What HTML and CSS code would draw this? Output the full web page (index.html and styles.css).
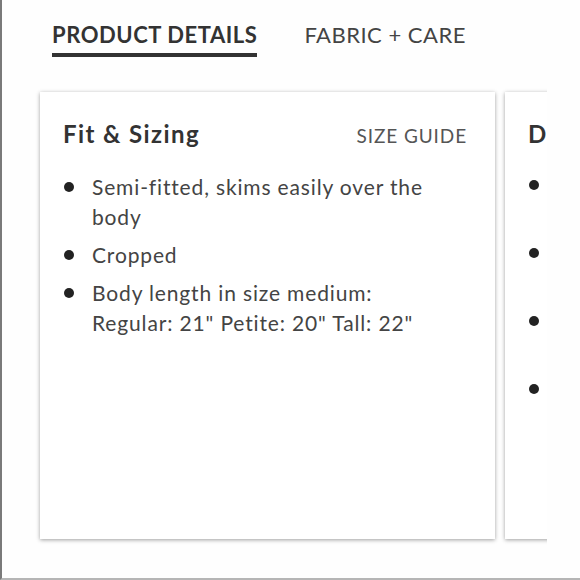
FILE: index.html
```html
<!DOCTYPE html>
<html lang="en">
<head>
<meta charset="utf-8">
<title>Product Details</title>
<link rel="stylesheet" href="styles.css">
</head>
<body>
<div class="frame">
  <nav class="tabs">
    <span class="tab tab-active">PRODUCT DETAILS</span>
    <span class="tab">FABRIC + CARE</span>
  </nav>
  <div class="carousel">
    <section class="card">
      <header class="card-head">
        <h2 class="card-title">Fit &amp; Sizing</h2>
        <span class="card-link">SIZE GUIDE</span>
      </header>
      <ul class="bullets">
        <li>Semi-fitted, skims easily over the body</li>
        <li>Cropped</li>
        <li>Body length in size medium:<br>Regular: 21" Petite: 20" Tall: 22"</li>
      </ul>
    </section>
    <section class="card">
      <header class="card-head">
        <h2 class="card-title">Details</h2>
      </header>
      <ul class="bullets">
        <li>Crewneck with ribbed trim at neckline and cuffs</li>
        <li>Long sleeves with a slightly dropped shoulder seam</li>
        <li>Lightweight knit that layers easily under jackets</li>
        <li>Import. Select stores, online and by phone only</li>
      </ul>
    </section>
  </div>
</div>
</body>
</html>
```
FILE: styles.css
```css
* { box-sizing: border-box; }
html, body {
  margin: 0;
  padding: 0;
  background: #ffffff;
}
body {
  width: 580px;
  height: 580px;
  overflow: hidden;
  font-family: Lato, "Open Sans", sans-serif;
  color: #3a3a3a;
}
.frame {
  width: 580px;
  height: 580px;
  border-left: 2px solid #7a7a7a;
  border-bottom: 2px solid #b5b5b5;
  background: #fefefe;
}
.tabs {
  display: flex;
  gap: 47px;
  padding: 20px 0 0 50px;
}
.tab {
  font-size: 22px;
  line-height: 30px;
  letter-spacing: 0.5px;
  color: #444;
  padding-bottom: 3px;
  border-bottom: 4px solid transparent;
}
.tab-active {
  font-weight: 700;
  letter-spacing: 0.55px;
  color: #333;
  border-bottom-color: #333;
}
.carousel {
  display: flex;
  gap: 10px;
  width: 515px;
  margin: 27px 0 0 30px;
  padding: 8px 0 10px 8px;
  overflow: hidden;
}
.card {
  flex: 0 0 455px;
  height: 447px;
  background: #fff;
  box-shadow: 0 1px 4px rgba(0, 0, 0, 0.38);
  padding: 27px 28px 0 23px;
}
.card-head {
  display: flex;
  justify-content: space-between;
  align-items: baseline;
}
.card-title {
  margin: 0;
  font-size: 24px;
  line-height: 30px;
  font-weight: 700;
  letter-spacing: 1.4px;
  color: #333;
  white-space: nowrap;
}
.card-link {
  font-size: 19px;
  line-height: 30px;
  letter-spacing: 0.9px;
  color: #555;
}
.bullets {
  list-style: none;
  margin: 21px 0 0;
  padding: 0;
  display: flex;
  flex-direction: column;
  gap: 8px;
}
.bullets li {
  display: flex;
  font-size: 21px;
  line-height: 30px;
  letter-spacing: 0.85px;
  color: #444;
}
.bullets li::before {
  content: "";
  flex: 0 0 10px;
  height: 10px;
  margin: 10px 18px 0 1px;
  border-radius: 50%;
  background: #222;
}
```
